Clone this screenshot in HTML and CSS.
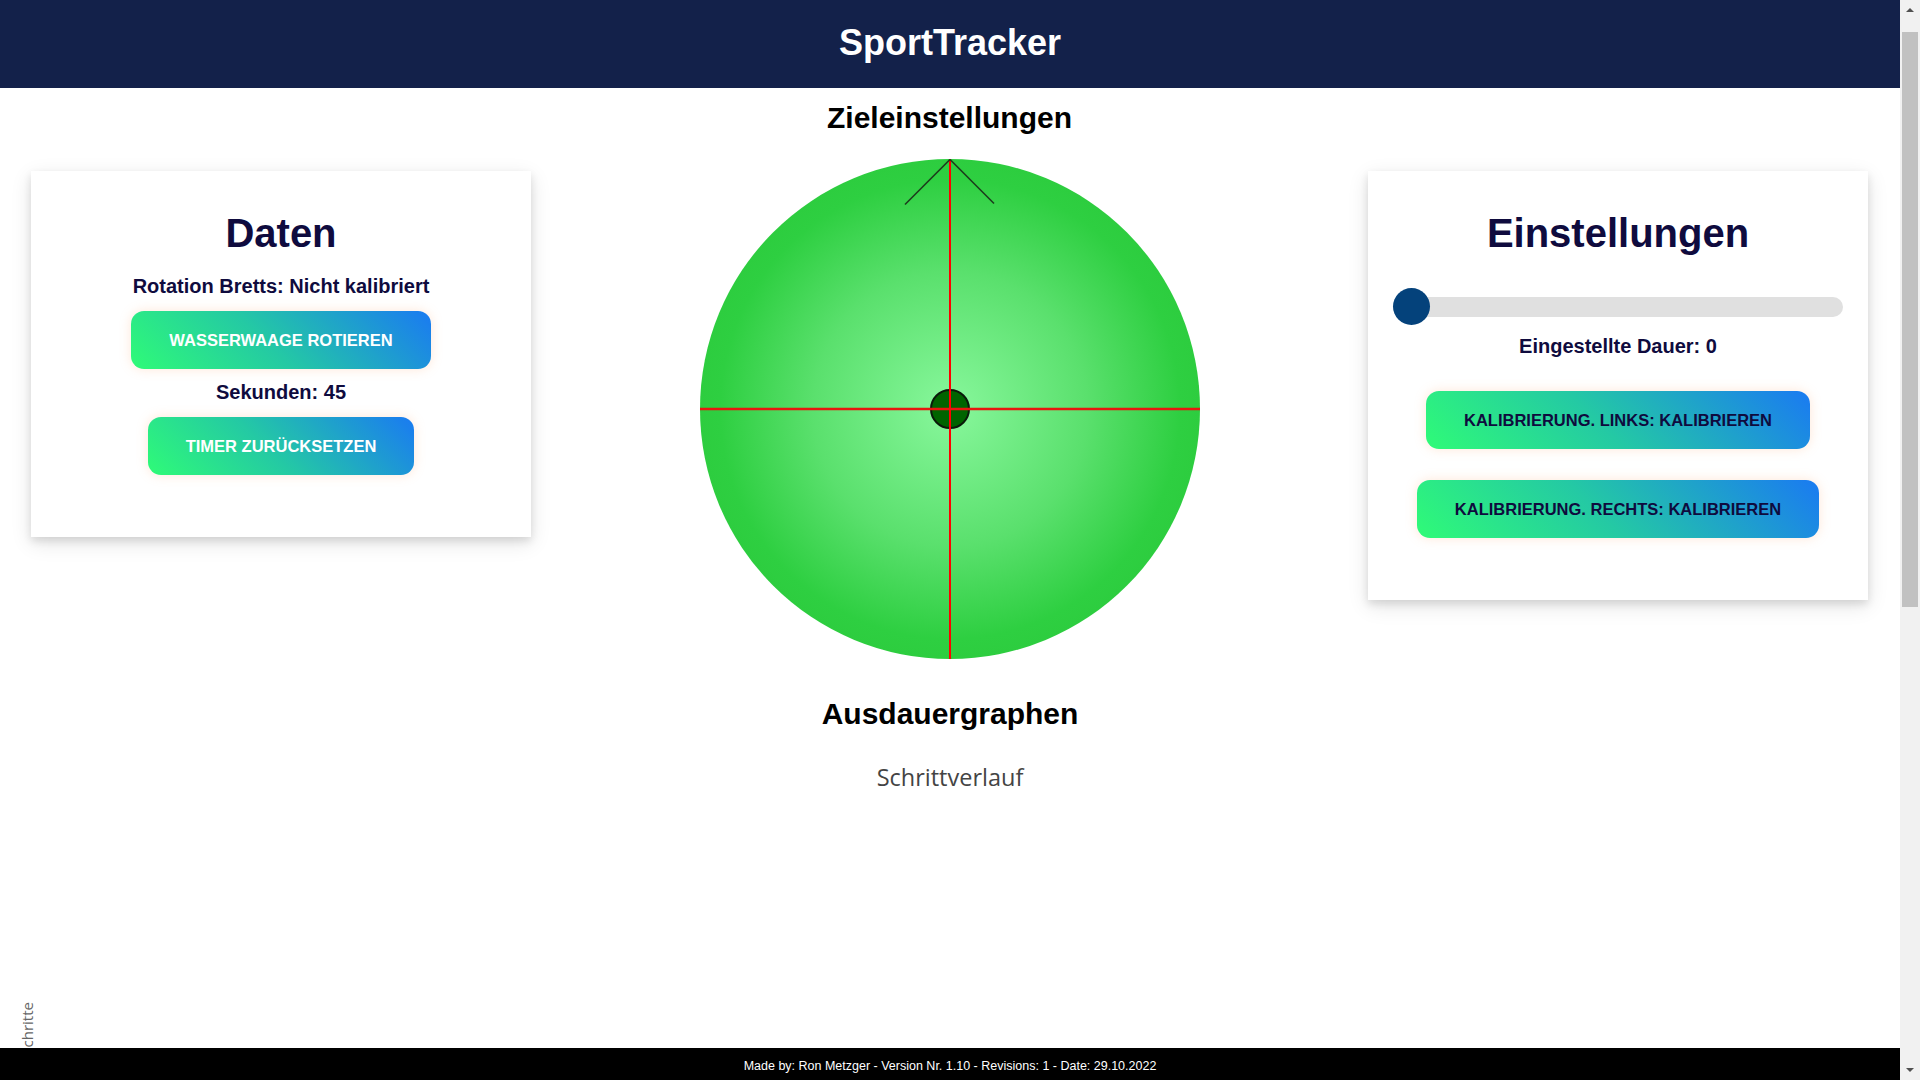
FILE: index.html
```html
<!DOCTYPE html>
<html lang="de">
<head>
<meta charset="utf-8">
<title>SportTracker</title>
<link rel="stylesheet" href="styles.css">
</head>
<body>
<header class="topbar">
  <h1 class="brand">SportTracker</h1>
</header>

<main class="dashboard">
  <section class="card card-data">
    <h2 class="card-title">Daten</h2>
    <p class="info">Rotation Bretts: Nicht kalibriert</p>
    <button class="grad-btn btn-light">Wasserwaage rotieren</button>
    <p class="info">Sekunden: 45</p>
    <button class="grad-btn btn-light">Timer zurücksetzen</button>
  </section>

  <section class="target">
    <h2 class="section-title">Zieleinstellungen</h2>
    <svg class="level" width="500" height="500" viewBox="0 0 500 500">
      <defs>
        <radialGradient id="lvl" cx="50%" cy="50%" r="50%">
          <stop offset="0" stop-color="#88f79c"/>
          <stop offset="0.55" stop-color="#5ae06d"/>
          <stop offset="0.92" stop-color="#2ecf41"/>
          <stop offset="1" stop-color="#2dcd3f"/>
        </radialGradient>
      </defs>
      <circle cx="250" cy="250" r="250" fill="url(#lvl)"/>
      <circle cx="250" cy="250" r="19" fill="#006400" stroke="#0a1a0a" stroke-width="2"/>
      <line x1="250" y1="0" x2="250" y2="500" stroke="#ff0000" stroke-width="2"/>
      <line x1="0" y1="250" x2="500" y2="250" stroke="#e8160f" stroke-width="2.4"/>
      <line x1="250" y1="0.5" x2="205" y2="45.5" stroke="#1c3d1c" stroke-width="1.6"/>
      <line x1="250" y1="0.5" x2="294" y2="44.5" stroke="#1c3d1c" stroke-width="1.6"/>
    </svg>
  </section>

  <section class="card card-settings">
    <h2 class="card-title">Einstellungen</h2>
    <input class="duration" type="range" min="0" max="100" value="0">
    <p class="info info-duration">Eingestellte Dauer: 0</p>
    <button class="grad-btn btn-dark btn-links">Kalibrierung. Links: Kalibrieren</button>
    <button class="grad-btn btn-dark btn-rechts">Kalibrierung. Rechts: Kalibrieren</button>
  </section>
</main>

<section class="graphs">
  <h2 class="section-title graphs-title">Ausdauergraphen</h2>
  <div class="chart">
    <div class="chart-title">Schrittverlauf</div>
    <div class="chart-body">
      <span class="axis-label">Schritte</span>
      <div class="plot"></div>
    </div>
  </div>
</section>

<footer class="footer">Made by: Ron Metzger - Version Nr. 1.10 - Revisions: 1 - Date: 29.10.2022</footer>

<div class="scrollbar" aria-hidden="true">
  <span class="sb-arrow sb-up"></span>
  <span class="sb-thumb"></span>
  <span class="sb-arrow sb-down"></span>
</div>
</body>
</html>
```

FILE: styles.css
```css
html, body {
  margin: 0;
  padding: 0;
}

body {
  width: 1900px;
  font-family: "Liberation Sans", Arial, sans-serif;
  background: #ffffff;
  color: #000;
}

.topbar {
  height: 88px;
  background: #13214a;
  display: flex;
  align-items: center;
  justify-content: center;
  padding-bottom: 3px;
  box-sizing: border-box;
}

.brand {
  margin: 0;
  color: #ffffff;
  font-size: 36px;
  font-weight: 700;
  line-height: 1;
}

.dashboard {
  display: grid;
  grid-template-columns: 500px 1fr 500px;
  align-items: start;
  width: 1837px;
  margin-left: 31px;
}

.card {
  background: #ffffff;
  margin-top: 83px;
  box-shadow: 0 4px 8px 0 rgba(0, 0, 0, 0.11), 0 6px 20px 0 rgba(0, 0, 0, 0.11);
  display: flex;
  flex-direction: column;
  align-items: center;
  padding: 39px 0 62px;
}

.card-title {
  margin: 0 0 19px;
  font-size: 40px;
  line-height: 46px;
  font-weight: 700;
  color: #0f0b3e;
}

.info {
  margin: 0;
  font-size: 20px;
  line-height: 23px;
  font-weight: 700;
  color: #0f0b3e;
}

.grad-btn {
  font-family: "Liberation Sans", Arial, sans-serif;
  font-size: 16.5px;
  line-height: 18px;
  font-weight: 700;
  text-transform: uppercase;
  border: none;
  border-radius: 13px;
  padding: 20px 38px;
  background: linear-gradient(45deg, #2ffb77 0%, #24c9a4 45%, #1a7af2 100%);
  box-shadow: 0 0 12px rgba(255, 170, 110, 0.28);
  cursor: pointer;
}

.card-data .grad-btn {
  margin: 13px 0 12px;
}

.card-data .grad-btn:last-child {
  margin-bottom: 0;
}

.btn-light {
  color: #ffffff;
}

.btn-dark {
  color: #0f0b3e;
}

.target {
  display: flex;
  flex-direction: column;
  align-items: center;
}

.section-title {
  margin: 12px 0 24px;
  font-size: 30px;
  line-height: 35px;
  font-weight: 700;
  color: #000;
  text-align: center;
}

.level {
  display: block;
}

.duration {
  -webkit-appearance: none;
  appearance: none;
  width: 450px;
  height: 37px;
  margin: 13px 0 10px;
  background: transparent;
}

.duration::-webkit-slider-runnable-track {
  height: 20px;
  background: #e0e0e0;
  border-radius: 10px;
}

.duration::-webkit-slider-thumb {
  -webkit-appearance: none;
  appearance: none;
  width: 37px;
  height: 37px;
  border-radius: 50%;
  background: #04427b;
  margin-top: -8.5px;
  border: none;
}

.btn-links {
  margin-top: 33px;
}

.btn-rechts {
  margin-top: 31px;
}

.graphs {
  padding-bottom: 1055px;
}

.graphs-title {
  margin: 37px 0 0;
}

.chart-title {
  margin-top: 30px;
  text-align: center;
  font-family: "Open Sans", "Noto Sans", sans-serif;
  font-size: 23.5px;
  line-height: 32px;
  color: #444444;
}

.chart-body {
  display: flex;
  align-items: center;
  height: 472px;
  padding-left: 17px;
}

.axis-label {
  writing-mode: vertical-rl;
  transform: rotate(180deg);
  font-family: "Open Sans", "Noto Sans", sans-serif;
  font-size: 15px;
  line-height: 20px;
  color: #666666;
}

.plot {
  flex: 1;
  height: 100%;
}

.footer {
  position: fixed;
  left: 0;
  right: 20px;
  bottom: 0;
  height: 32px;
  background: #000000;
  color: #ffffff;
  font-size: 12.5px;
  display: flex;
  align-items: center;
  justify-content: center;
  padding-top: 4px;
  box-sizing: border-box;
}

/* page scrollbar, drawn over the right edge */
.scrollbar {
  position: fixed;
  top: 0;
  right: 0;
  width: 20px;
  height: 100vh;
  background: #f1f1f1;
}

.sb-thumb {
  position: absolute;
  top: 32px;
  left: 2px;
  width: 16px;
  height: 575px;
  background: #c1c1c1;
}

.sb-arrow {
  position: absolute;
  left: 6px;
  width: 0;
  height: 0;
  border-left: 4px solid transparent;
  border-right: 4px solid transparent;
}

.sb-up {
  top: 8px;
  border-bottom: 4px solid #505050;
}

.sb-down {
  bottom: 8px;
  border-top: 4px solid #505050;
}
```
